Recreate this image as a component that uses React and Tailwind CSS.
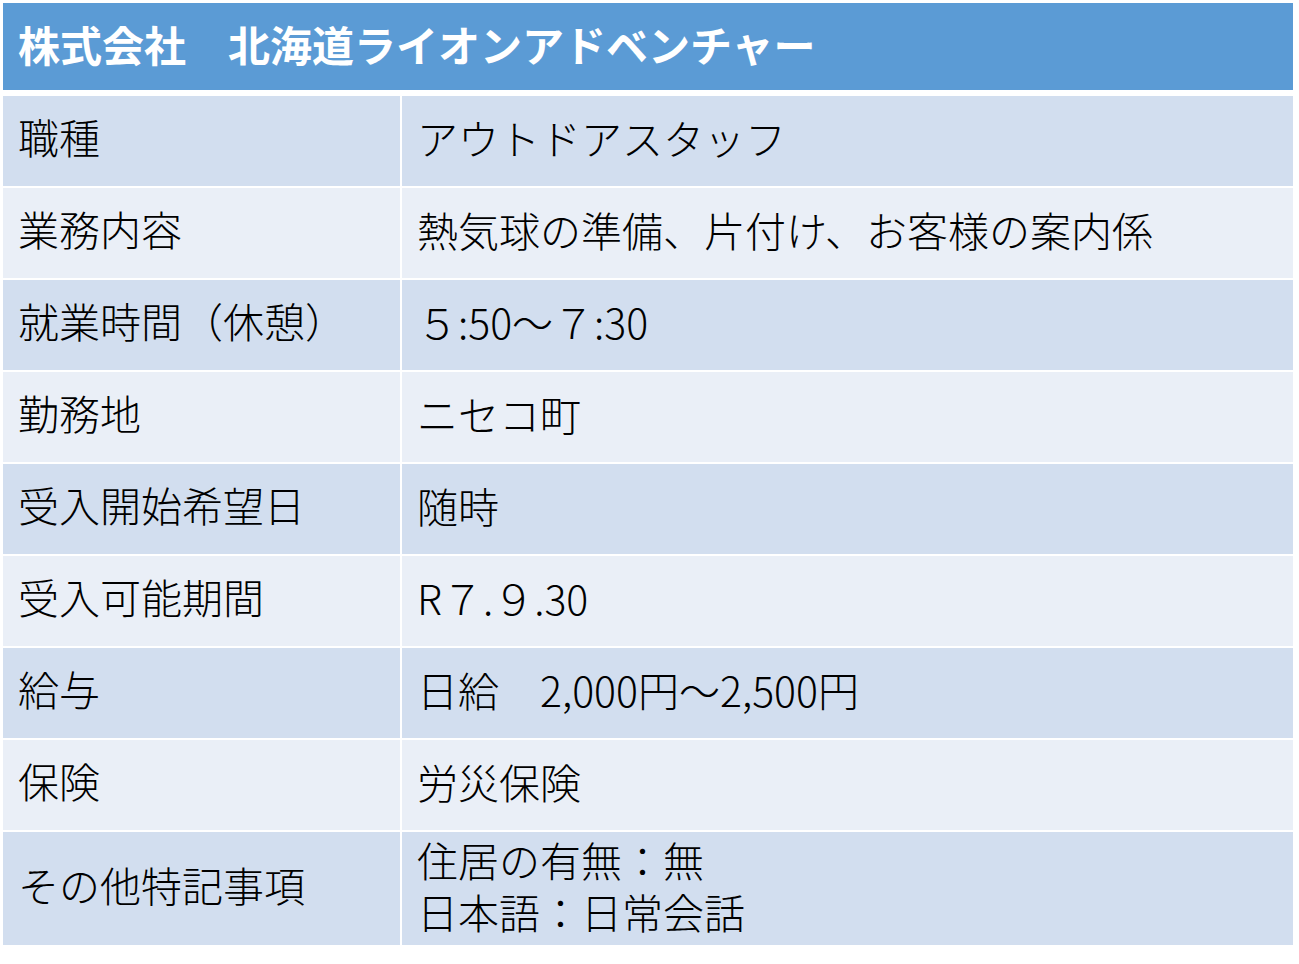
const ROWS = [
  { label: '職種', value: ['アウトドアスタッフ'] },
  { label: '業務内容', value: ['熱気球の準備、片付け、お客様の案内係'] },
  { label: '就業時間（休憩）', value: ['５:50～７:30'] },
  { label: '勤務地', value: ['ニセコ町'] },
  { label: '受入開始希望日', value: ['随時'] },
  { label: '受入可能期間', value: ['R７.９.30'] },
  { label: '給与', value: ['日給　2,000円～2,500円'] },
  { label: '保険', value: ['労災保険'] },
  { label: 'その他特記事項', value: ['住居の有無：無', '日本語：日常会話'], tall: true },
];

export default function App() {
  return (
    <div
      className="min-h-[964px] w-[1299px] bg-white pl-[3px] pt-[3px]"
      style={{ fontFamily: '"Noto Sans CJK JP", "Noto Sans", sans-serif' }}
    >
      <div className="w-[1290px]">
        <div className="flex h-[87px] items-center bg-[#5b9bd5] pb-[6px] pl-[15px] text-[42px] font-bold text-white">
          株式会社　北海道ライオンアドベンチャー
        </div>
        <div className="mt-[6px] flex flex-col gap-[2px]">
          {ROWS.map((r, i) => {
            const bg = i % 2 === 0 ? 'bg-[#d2deef]' : 'bg-[#eaeff7]';
            return (
              <div key={i} className={`flex gap-[2px] ${r.tall ? 'h-[113px]' : 'h-[90px]'}`}>
                <div className={`flex w-[397px] items-center pb-[8px] pl-[15px] text-[41px] font-light text-black ${bg}`}>
                  {r.label}
                </div>
                <div className={`flex flex-1 flex-col justify-center pb-[8px] pl-[15px] text-[41px] font-light leading-[52px] text-black ${bg}`}>
                  {r.value.map((v, j) => (
                    <div key={j}>{v}</div>
                  ))}
                </div>
              </div>
            );
          })}
        </div>
      </div>
    </div>
  );
}
